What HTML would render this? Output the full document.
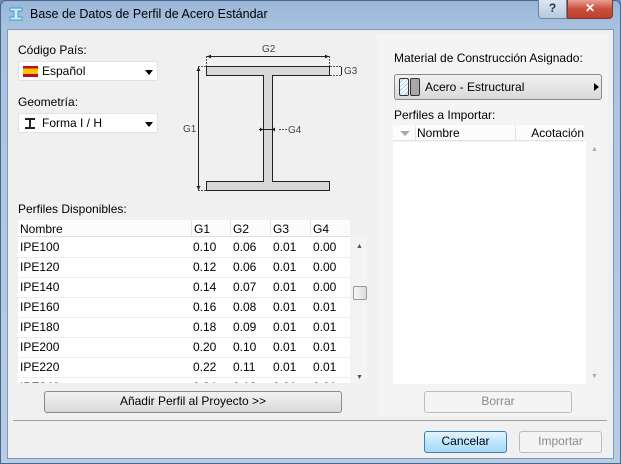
<!DOCTYPE html><html><head><style>
*{box-sizing:border-box;margin:0;padding:0}
body{width:621px;height:464px;overflow:hidden;font-family:"Liberation Sans",sans-serif;font-size:12px;color:#000;background:#6e8fb8;position:relative}
.a{position:absolute}
#frame{left:0;top:0;width:621px;height:464px;background:linear-gradient(#9ab6d8,#a9c3e0 30px,#b7cde6);border:1px solid #4a6688;border-radius:6px 6px 0 0}
#client{left:7px;top:29px;width:607px;height:430px;background:#f0f0f0;border:1px solid #7f98b5}
.dd{background:#fff;border:1px solid #e2e2e2;height:20px}
.tri{width:0;height:0;border-left:4px solid transparent;border-right:4px solid transparent;border-top:5px solid #000}
.btn{border:1px solid #8a8a8a;border-radius:3px;background:linear-gradient(#f2f2f2,#e6e6e6 50%,#d8d8d8);text-align:center;line-height:19px}
.dis{border-color:#bcbcbc;color:#8a8a8a;background:#f4f4f4}
td{height:20px;border-bottom:1px solid #ececec;padding:0}
</style></head><body>
<div class="a" id="frame"></div>
<svg class="a" style="left:9px;top:7px" width="14" height="14"><path d="M1 1h12v3h-4v6h4v3H1v-3h4V4H1z" fill="#cfe8f5" stroke="#3aa0d0"/></svg>
<div class="a" style="left:30px;top:7px;font-size:12.5px">Base de Datos de Perfil de Acero Estándar</div>
<div class="a" style="left:538px;top:0;width:29px;height:19px;border:1px solid #6a84a6;border-top:none;border-radius:0 0 0 4px;background:linear-gradient(#dbe6f3,#b6c9df);text-align:center;font-weight:bold;color:#333;line-height:17px">?</div>
<div class="a" style="left:567px;top:0;width:46px;height:19px;border:1px solid #7a3a30;border-top:none;border-radius:0 0 4px 0;background:linear-gradient(#e8a093,#c8503a 50%,#c04030);text-align:center;font-weight:bold;color:#fff;line-height:17px">✕</div>
<div class="a" id="client"></div>
<div class="a" style="left:377px;top:34px;width:231px;height:382px;background:#f4f4f4"></div>
<div class="a" style="left:18px;top:43px">Código País:</div>
<div class="a dd" style="left:18px;top:61px;width:140px"><div class="a" style="left:4px;top:4px;width:15px;height:11px;background:linear-gradient(#c60b1e 25%,#ffc400 25%,#ffc400 75%,#c60b1e 75%)"></div><div class="a" style="left:23px;top:2px">Español</div><div class="a tri" style="left:126px;top:8px"></div></div>
<div class="a" style="left:18px;top:95px">Geometría:</div>
<div class="a dd" style="left:18px;top:113px;width:140px"><svg class="a" style="left:5px;top:4px" width="12" height="11"><path d="M1 1h10M6 1v9M1 10h10" stroke="#222" stroke-width="2"/></svg><div class="a" style="left:23px;top:2px">Forma I / H</div><div class="a tri" style="left:126px;top:8px"></div></div>
<svg class="a" style="left:0;top:0" width="621" height="464">
<path d="M206.5 66.5h123v9h-57v106h57v9h-123v-9h57v-106h-57z" fill="#d8d8d8" stroke="#222"/>
<g stroke="#555" stroke-dasharray="2 1" fill="none">
<path d="M206.5 56v10M329.5 56v10M198 66.5h8M198 190.5h8M330 66.5h11M330 75.5h11M279 129.5h8"/>
</g>
<g stroke="#222" fill="none">
<path d="M207 56.5h122M198.5 67v123M341.5 67v8M259 129.5h13"/>
</g>
<g fill="#222"><path d="M207 56.5l4-2v4zM329 56.5l-4-2v4zM198.5 67l-2 4h4zM198.5 190l-2-4h4zM263 129.5l-3-2v4zM272 129.5l3-2v4z"/></g>
<g font-size="10" fill="#444" font-family="Liberation Sans"><text x="262" y="52">G2</text><text x="183" y="132">G1</text><text x="344" y="74">G3</text><text x="288" y="133">G4</text></g>
</svg>
<div class="a" style="left:18px;top:202px">Perfiles Disponibles:</div>
<div class="a" style="left:18px;top:220px;width:332px;height:163px;background:#fff;overflow:hidden">
<div style="height:17px;border-bottom:1px solid #ddd;background:#fcfcfc;position:relative"><span class="a" style="left:2px;top:2px">Nombre</span><span class="a" style="left:173px;top:0;border-left:1px solid #e4e4e4;height:17px;padding:2px 0 0 2px">G1</span><span class="a" style="left:212px;top:0;border-left:1px solid #e4e4e4;height:17px;padding:2px 0 0 2px">G2</span><span class="a" style="left:252px;top:0;border-left:1px solid #e4e4e4;height:17px;padding:2px 0 0 2px">G3</span><span class="a" style="left:292px;top:0;border-left:1px solid #e4e4e4;height:17px;padding:2px 0 0 2px">G4</span></div>
<table style="border-collapse:collapse;width:332px">
<tr><td style="padding-left:2px;width:175px">IPE100</td><td style="width:40px">0.10</td><td style="width:40px">0.06</td><td style="width:40px">0.01</td><td>0.00</td></tr>
<tr><td style="padding-left:2px">IPE120</td><td>0.12</td><td>0.06</td><td>0.01</td><td>0.00</td></tr>
<tr><td style="padding-left:2px">IPE140</td><td>0.14</td><td>0.07</td><td>0.01</td><td>0.00</td></tr>
<tr><td style="padding-left:2px">IPE160</td><td>0.16</td><td>0.08</td><td>0.01</td><td>0.01</td></tr>
<tr><td style="padding-left:2px">IPE180</td><td>0.18</td><td>0.09</td><td>0.01</td><td>0.01</td></tr>
<tr><td style="padding-left:2px">IPE200</td><td>0.20</td><td>0.10</td><td>0.01</td><td>0.01</td></tr>
<tr><td style="padding-left:2px">IPE220</td><td>0.22</td><td>0.11</td><td>0.01</td><td>0.01</td></tr>
<tr><td style="padding-left:2px">IPE240</td><td>0.24</td><td>0.12</td><td>0.01</td><td>0.01</td></tr>
</table></div>
<div class="a" style="left:350px;top:237px;width:17px;height:146px;background:#f3f3f3"></div>
<div class="a" style="left:356px;top:243px;font-size:7px;color:#555">▲</div>
<div class="a" style="left:356px;top:374px;font-size:7px;color:#555">▼</div>
<div class="a" style="left:353px;top:286px;width:14px;height:14px;border:1px solid #999;border-radius:2px;background:linear-gradient(90deg,#f4f4f4,#dcdcdc)"></div>
<div class="a btn" style="left:44px;top:391px;width:298px;height:22px">Añadir Perfil al Proyecto &gt;&gt;</div>
<div class="a" style="left:13px;top:420px;width:594px;height:1px;background:#a0a0a0"></div>
<div class="a" style="left:394px;top:51px">Material de Construcción Asignado:</div>
<div class="a btn" style="left:394px;top:74px;width:208px;height:26px;text-align:left"><div class="a" style="left:4px;top:3px;width:10px;height:18px;border:1px solid #333;border-radius:2px;background:repeating-linear-gradient(135deg,#fff 0 2px,#9cc4ea 2px 3px)"></div><div class="a" style="left:15px;top:3px;width:10px;height:18px;border:1px solid #333;border-radius:2px;background:#a8a8a8"></div><div class="a" style="left:30px;top:3px">Acero - Estructural</div><div class="a" style="left:199px;top:8px;border-top:4px solid transparent;border-bottom:4px solid transparent;border-left:5px solid #000"></div></div>
<div class="a" style="left:394px;top:108px">Perfiles a Importar:</div>
<div class="a" style="left:393px;top:125px;width:191px;height:16px;background:#fcfcfc;border-bottom:1px solid #e4e4e4"><div class="a" style="left:7px;top:6px;border-left:5px solid transparent;border-right:5px solid transparent;border-top:5px solid #aaa"></div><span class="a" style="left:22px;top:0;border-left:1px solid #e4e4e4;padding:1px 0 0 1px;height:16px">Nombre</span><span class="a" style="left:122px;top:0;border-left:1px solid #e4e4e4;height:16px;width:69px;text-align:right;padding-top:1px">Acotación</span></div>
<div class="a" style="left:393px;top:142px;width:193px;height:242px;background:#fff"></div>
<div class="a" style="left:586px;top:142px;width:17px;height:242px;background:#f3f3f3"></div>
<div class="a" style="left:591px;top:146px;font-size:7px;color:#aaa">▲</div>
<div class="a" style="left:591px;top:373px;font-size:7px;color:#aaa">▼</div>
<div class="a btn dis" style="left:424px;top:391px;width:148px;height:22px">Borrar</div>
<div class="a btn" style="left:424px;top:431px;width:83px;height:22px;border-color:#3c7fb1;background:linear-gradient(#e6f4fc,#bee6fd 50%,#a7d9f5)">Cancelar</div>
<div class="a btn dis" style="left:519px;top:431px;width:83px;height:22px">Importar</div>
</body></html>
